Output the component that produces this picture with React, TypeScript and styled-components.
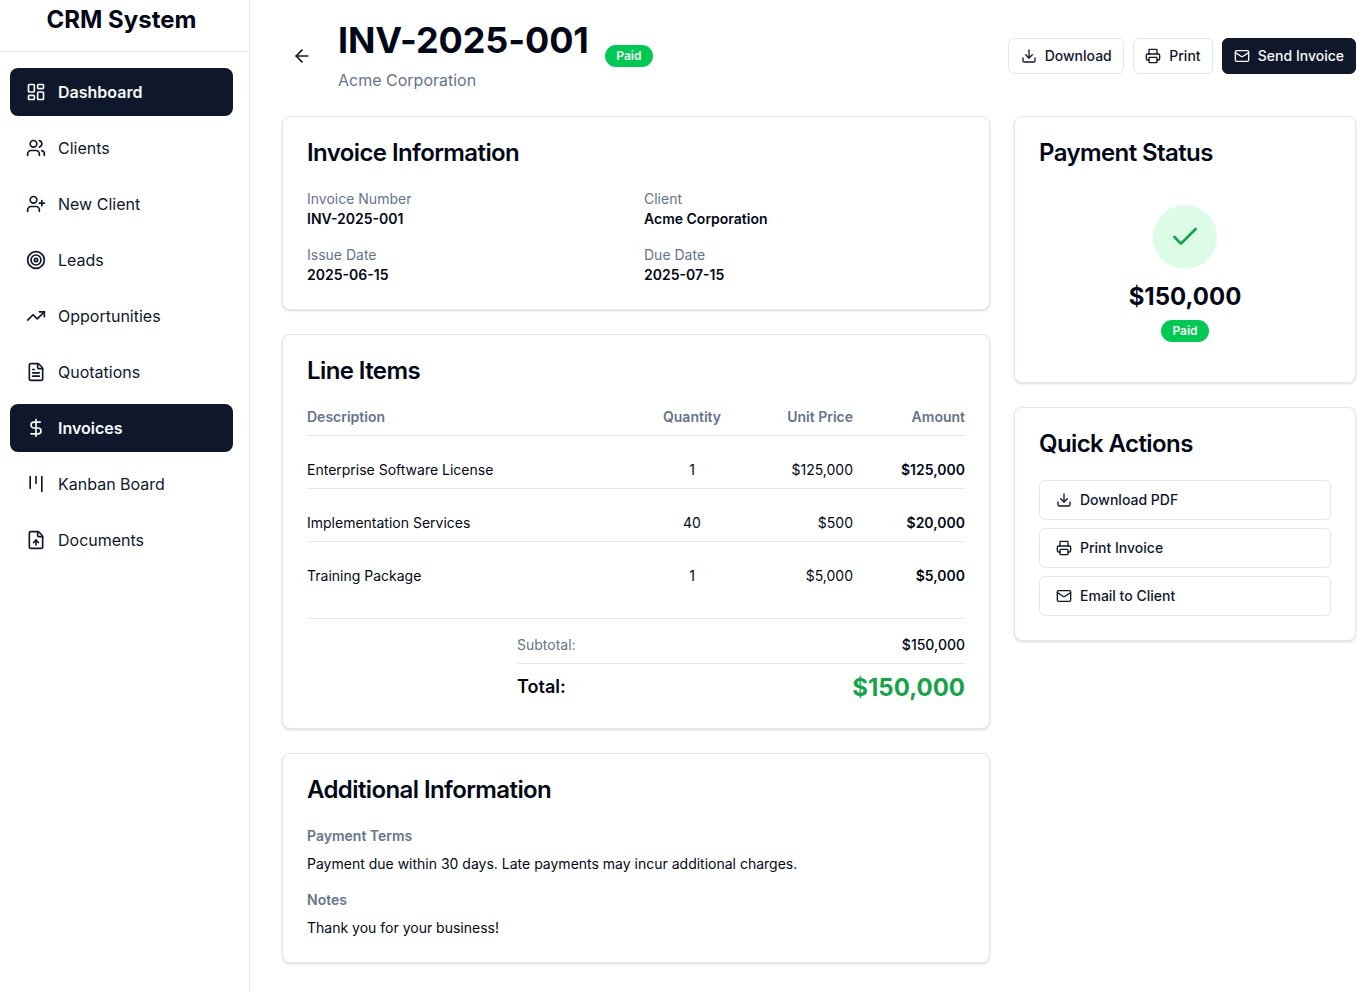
import styled, { createGlobalStyle } from 'styled-components';
import {
  ArrowLeft,
  Check,
  DollarSign,
  Download,
  FileText,
  FileUp,
  Kanban,
  LayoutDashboard,
  Mail,
  Printer,
  Target,
  TrendingUp,
  UserPlus,
  Users,
} from 'lucide-react';

const GlobalStyle = createGlobalStyle`
  * {
    box-sizing: border-box;
  }

  body {
    margin: 0;
    background: #ffffff;
    color: #020817;
    font-family: Inter, 'Liberation Sans', sans-serif;
  }
`;

const Layout = styled.div`
  display: flex;
  height: 992px;
  overflow: hidden;
`;

const Sidebar = styled.aside`
  width: 250px;
  flex-shrink: 0;
  border-right: 1px solid #e2e8f0;
`;

const Brand = styled.div`
  height: 52px;
  border-bottom: 1px solid #e2e8f0;
  padding-right: 6px;
  text-align: center;
  font-size: 24px;
  line-height: 40px;
  font-weight: 700;
`;

const Nav = styled.nav`
  display: flex;
  flex-direction: column;
  gap: 8px;
  padding: 16px 16px 0 10px;
`;

const NavItem = styled.a<{ $active?: boolean }>`
  display: flex;
  align-items: center;
  gap: 12px;
  height: 48px;
  padding: 0 16px;
  border-radius: 8px;
  font-size: 16px;
  line-height: 24px;
  font-weight: ${props => (props.$active ? 600 : 400)};
  color: ${props => (props.$active ? '#f8fafc' : '#0f172a')};
  background: ${props => (props.$active ? '#0f172a' : 'transparent')};
`;

const Main = styled.main`
  flex: 1;
  min-width: 0;
  padding: 16px 9px 0 32px;
`;

const Header = styled.header`
  display: flex;
  align-items: center;
  justify-content: space-between;
  height: 80px;
  margin-bottom: 20px;
`;

const HeaderLeft = styled.div`
  display: flex;
  align-items: center;
  gap: 16px;
`;

const BackButton = styled.button`
  display: flex;
  align-items: center;
  justify-content: center;
  width: 40px;
  height: 40px;
  padding: 0;
  border: none;
  background: none;
  color: #0f172a;
`;

const TitleBlock = styled.div`
  display: flex;
  flex-direction: column;
  gap: 8px;
`;

const Title = styled.h1`
  margin: 0;
  font-size: 36px;
  line-height: 40px;
  font-weight: 700;
  letter-spacing: -0.1px;
`;

const Subtitle = styled.p`
  margin: 0;
  font-size: 16px;
  line-height: 24px;
  color: #64748b;
`;

const Badge = styled.span`
  display: inline-block;
  padding: 2px 11.5px;
  border-radius: 999px;
  background: #00c853;
  color: #f8fafc;
  font-size: 12px;
  line-height: 18px;
  font-weight: 600;
`;

const HeaderActions = styled.div`
  display: flex;
  gap: 9px;
`;

const Button = styled.button<{ $primary?: boolean }>`
  display: flex;
  align-items: center;
  gap: 8px;
  height: 36px;
  padding: 0 ${props => (props.$primary ? '11px' : '11.25px')};
  border-radius: 6px;
  border: 1px solid ${props => (props.$primary ? '#0f172a' : '#e2e8f0')};
  background: ${props => (props.$primary ? '#0f172a' : '#ffffff')};
  color: ${props => (props.$primary ? '#f8fafc' : '#0f172a')};
  font-family: inherit;
  font-size: 14px;
  line-height: 20px;
  font-weight: 500;
`;

const Content = styled.div`
  display: grid;
  grid-template-columns: 708px 342px;
  gap: 24px;
  align-items: start;
`;

const Column = styled.div`
  display: flex;
  flex-direction: column;
  gap: 24px;
`;

const Card = styled.section`
  padding: 24px;
  border: 1px solid #e2e8f0;
  border-radius: 8px;
  background: #ffffff;
  box-shadow: 0 1px 2px 0 rgba(0, 0, 0, 0.05), 0 1px 3px 0 rgba(0, 0, 0, 0.1);
`;

const CardTitle = styled.h2`
  margin: 0 0 24px;
  font-size: 24px;
  line-height: 24px;
  font-weight: 600;
  letter-spacing: -0.6px;
`;

const InfoGrid = styled.dl`
  display: grid;
  grid-template-columns: 1fr 1fr;
  gap: 16px;
  margin: 0;
`;

const InfoItem = styled.div`
  display: flex;
  flex-direction: column;
`;

const InfoLabel = styled.dt`
  font-size: 14px;
  line-height: 20px;
  color: #64748b;
`;

const InfoValue = styled.dd`
  margin: 0;
  font-size: 14px;
  line-height: 20px;
  font-weight: 600;
`;

const Table = styled.table`
  width: 100%;
  border-collapse: collapse;
  font-size: 14px;
  line-height: 20px;
`;

const HeadCell = styled.th<{ $align?: string; $width?: string }>`
  padding: 0 0 8px;
  border-bottom: 1px solid #e2e8f0;
  color: #64748b;
  font-weight: 600;
  text-align: ${props => props.$align || 'left'};
  width: ${props => props.$width || 'auto'};
`;

const Row = styled.tr`
  border-bottom: 1px solid #e2e8f0;

  &:last-child {
    border-bottom: none;
  }
`;

const Cell = styled.td<{ $align?: string; $strong?: boolean }>`
  height: 53px;
  padding: 16px 0 0;
  text-align: ${props => props.$align || 'left'};
  font-weight: ${props => (props.$strong ? 600 : 400)};
`;

const Totals = styled.div`
  margin-top: 23px;
  border-top: 1px solid #e2e8f0;
  padding: 16px 0 0 210px;
`;

const SubtotalRow = styled.div`
  display: flex;
  justify-content: space-between;
  height: 29px;
  font-size: 14px;
  line-height: 20px;
  border-bottom: 1px solid #e2e8f0;
`;

const Muted = styled.span`
  color: #64748b;
`;

const SubtotalValue = styled.span`
  font-weight: 500;
`;

const TotalRow = styled.div`
  display: flex;
  justify-content: space-between;
  align-items: center;
  height: 40px;
  padding-top: 8px;
  font-size: 18px;
  font-weight: 600;
`;

const TotalLabel = styled.span`
  margin-bottom: 3px;
`;

const TotalAmount = styled.span`
  font-size: 24px;
  line-height: 32px;
  font-weight: 700;
  color: #16a34a;
`;

const NoteLabel = styled.h3`
  margin: 0 0 8px;
  font-size: 14px;
  line-height: 20px;
  font-weight: 600;
  color: #64748b;
`;

const NoteText = styled.p`
  margin: 0 0 16px;
  font-size: 14px;
  line-height: 20px;

  &:last-child {
    margin-bottom: 0;
  }
`;

const StatusBody = styled.div`
  display: flex;
  flex-direction: column;
  align-items: center;
  padding: 16px 0;
`;

const StatusCircle = styled.div`
  display: flex;
  align-items: center;
  justify-content: center;
  width: 64px;
  height: 64px;
  border-radius: 50%;
  background: #dcfce7;
  color: #16a34a;
  margin-bottom: 12px;
`;

const StatusAmount = styled.div`
  font-size: 24px;
  line-height: 32px;
  font-weight: 700;
  margin-bottom: 7px;
`;

const QuickList = styled.div`
  display: flex;
  flex-direction: column;
  gap: 8px;
`;

const QuickButton = styled.button`
  display: flex;
  align-items: center;
  gap: 8px;
  height: 40px;
  padding: 0 16px;
  border: 1px solid #e2e8f0;
  border-radius: 6px;
  background: #ffffff;
  color: #0f172a;
  font-family: inherit;
  font-size: 14px;
  line-height: 20px;
  font-weight: 500;
`;

const navItems = [
  { label: 'Dashboard', icon: LayoutDashboard, active: true },
  { label: 'Clients', icon: Users },
  { label: 'New Client', icon: UserPlus },
  { label: 'Leads', icon: Target },
  { label: 'Opportunities', icon: TrendingUp },
  { label: 'Quotations', icon: FileText },
  { label: 'Invoices', icon: DollarSign, active: true },
  { label: 'Kanban Board', icon: Kanban },
  { label: 'Documents', icon: FileUp },
];

const info = [
  { label: 'Invoice Number', value: 'INV-2025-001' },
  { label: 'Client', value: 'Acme Corporation' },
  { label: 'Issue Date', value: '2025-06-15' },
  { label: 'Due Date', value: '2025-07-15' },
];

const lineItems = [
  { description: 'Enterprise Software License', quantity: 1, price: '$125,000', amount: '$125,000' },
  { description: 'Implementation Services', quantity: 40, price: '$500', amount: '$20,000' },
  { description: 'Training Package', quantity: 1, price: '$5,000', amount: '$5,000' },
];

function App() {
  return (
    <Layout>
      <GlobalStyle />
      <Sidebar>
        <Brand>CRM System</Brand>
        <Nav>
          {navItems.map(({ label, icon: Icon, active }) => (
            <NavItem key={label} $active={active}>
              <Icon size={20} />
              {label}
            </NavItem>
          ))}
        </Nav>
      </Sidebar>

      <Main>
        <Header>
          <HeaderLeft>
            <BackButton>
              <ArrowLeft size={20} />
            </BackButton>
            <TitleBlock>
              <Title>INV-2025-001</Title>
              <Subtitle>Acme Corporation</Subtitle>
            </TitleBlock>
            <Badge>Paid</Badge>
          </HeaderLeft>
          <HeaderActions>
            <Button>
              <Download size={16} /> Download
            </Button>
            <Button>
              <Printer size={16} /> Print
            </Button>
            <Button $primary>
              <Mail size={16} /> Send Invoice
            </Button>
          </HeaderActions>
        </Header>

        <Content>
          <Column>
            <Card>
              <CardTitle>Invoice Information</CardTitle>
              <InfoGrid>
                {info.map(item => (
                  <InfoItem key={item.label}>
                    <InfoLabel>{item.label}</InfoLabel>
                    <InfoValue>{item.value}</InfoValue>
                  </InfoItem>
                ))}
              </InfoGrid>
            </Card>

            <Card>
              <CardTitle>Line Items</CardTitle>
              <Table>
                <thead>
                  <tr>
                    <HeadCell>Description</HeadCell>
                    <HeadCell $align="center" $width="98px">Quantity</HeadCell>
                    <HeadCell $align="right" $width="112px">Unit Price</HeadCell>
                    <HeadCell $align="right" $width="112px">Amount</HeadCell>
                  </tr>
                </thead>
                <tbody>
                  {lineItems.map(item => (
                    <Row key={item.description}>
                      <Cell>{item.description}</Cell>
                      <Cell $align="center">{item.quantity}</Cell>
                      <Cell $align="right">{item.price}</Cell>
                      <Cell $align="right" $strong>{item.amount}</Cell>
                    </Row>
                  ))}
                </tbody>
              </Table>
              <Totals>
                <SubtotalRow>
                  <Muted>Subtotal:</Muted>
                  <SubtotalValue>$150,000</SubtotalValue>
                </SubtotalRow>
                <TotalRow>
                  <TotalLabel>Total:</TotalLabel>
                  <TotalAmount>$150,000</TotalAmount>
                </TotalRow>
              </Totals>
            </Card>

            <Card>
              <CardTitle>Additional Information</CardTitle>
              <NoteLabel>Payment Terms</NoteLabel>
              <NoteText>Payment due within 30 days. Late payments may incur additional charges.</NoteText>
              <NoteLabel>Notes</NoteLabel>
              <NoteText>Thank you for your business!</NoteText>
            </Card>
          </Column>

          <Column>
            <Card>
              <CardTitle>Payment Status</CardTitle>
              <StatusBody>
                <StatusCircle>
                  <Check size={32} />
                </StatusCircle>
                <StatusAmount>$150,000</StatusAmount>
                <Badge>Paid</Badge>
              </StatusBody>
            </Card>

            <Card>
              <CardTitle>Quick Actions</CardTitle>
              <QuickList>
                <QuickButton>
                  <Download size={16} /> Download PDF
                </QuickButton>
                <QuickButton>
                  <Printer size={16} /> Print Invoice
                </QuickButton>
                <QuickButton>
                  <Mail size={16} /> Email to Client
                </QuickButton>
              </QuickList>
            </Card>
          </Column>
        </Content>
      </Main>
    </Layout>
  );
}

export default App;
